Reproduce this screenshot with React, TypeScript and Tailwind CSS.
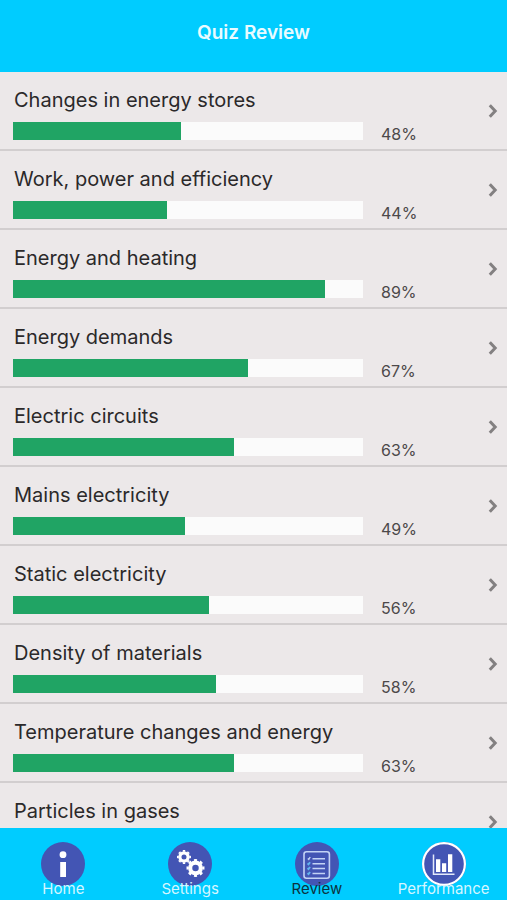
import type { ReactNode } from "react";
import { clsx } from "clsx";

const topics = [
  { name: "Changes in energy stores", score: 48 },
  { name: "Work, power and efficiency", score: 44 },
  { name: "Energy and heating", score: 89 },
  { name: "Energy demands", score: 67 },
  { name: "Electric circuits", score: 63 },
  { name: "Mains electricity", score: 49 },
  { name: "Static electricity", score: 56 },
  { name: "Density of materials", score: 58 },
  { name: "Temperature changes and energy", score: 63 },
  { name: "Particles in gases", score: 52 }
];

function Badge({ children }: { children: ReactNode }) {
  return (
    <svg viewBox="0 0 44 44" className="size-11" aria-hidden="true">
      <circle cx="22" cy="22" r="22" fill="#4355b4" />
      {children}
    </svg>
  );
}

function InfoIcon() {
  return (
    <Badge>
      <circle cx="22" cy="12.7" r="3.4" fill="#fff" />
      <rect x="19.2" y="20" width="5.8" height="15" fill="#fff" />
    </Badge>
  );
}

// eight teeth: the dashed ring is split into sixteen equal steps
function Gear({ cx, cy, r }: { cx: number; cy: number; r: number }) {
  return (
    <g fill="none" stroke="#fff">
      <circle cx={cx} cy={cy} r={r * 0.59} strokeWidth={r * 0.46} />
      <circle cx={cx} cy={cy} r={r * 0.88} strokeWidth={r * 0.24} pathLength="16" strokeDasharray="1 1" strokeDashoffset="0.5" />
    </g>
  );
}

function GearsIcon() {
  return (
    <Badge>
      <Gear cx={16} cy={15} r={7} />
      <Gear cx={27.5} cy={26} r={9} />
    </Badge>
  );
}

function ChecklistIcon() {
  return (
    <Badge>
      <rect x="9" y="9.8" width="25.4" height="26.4" rx="2.5" fill="none" stroke="#c3d3f5" strokeWidth="1.6" />
      <path d="M17.5 16.7H30M17.5 21.7H30M17.5 26.5H30M17.5 31.6H30" stroke="#c3d3f5" strokeWidth="1.5" />
      <path d="M12.8 16.4l1 1 1.4-2.4" fill="none" stroke="#c3d3f5" strokeWidth="1.4" />
      <path d="M12.5 21.4l1 1 1.6-2.2M12.5 26.2l1 1 1.6-2.2M12.5 31.2l1 1 1.6-2.2" fill="none" stroke="#62b5ee" strokeWidth="1.8" />
    </Badge>
  );
}

function ChartIcon() {
  return (
    <Badge>
      <circle cx="22" cy="22" r="20.9" fill="none" stroke="#fff" strokeWidth="2.2" />
      <path d="M11.5 12.5V32.2H32.5" fill="none" stroke="#e3e9fa" strokeWidth="1.5" />
      <path d="M14 17.3h4.3V30H14zM20 21.3h4.2V30H20zM26 12.2h4.3V30H26z" fill="#fff" />
    </Badge>
  );
}

const tabs = [
  { href: "#home", label: "Home", icon: InfoIcon },
  { href: "#settings", label: "Settings", icon: GearsIcon },
  { href: "#review", label: "Review", icon: ChecklistIcon, active: true },
  { href: "#performance", label: "Performance", icon: ChartIcon }
];

function TopicRow({ name, score }: { name: string; score: number }) {
  return (
    <li>
      <button type="button" className="flex w-full items-center border-b-2 border-[#d2cecf] pr-[9px] pl-[13px] text-left">
        <span className="flex-1 pt-4 pb-[9px]">
          <span className="block px-px text-[20px] leading-6 text-[#2b292a]">{name}</span>
          <span className="mt-2.5 flex items-center">
            <span className="h-[18px] flex-1 bg-[#fbfbfb]">
              <span className="block h-full bg-[#20a464]" style={{ width: `${score}%` }} />
            </span>
            <span className="h-[18px] w-[125px] pt-0.5 pl-4.5 text-[16px] leading-5 text-[#4c494a]">{score}%</span>
          </span>
        </span>
        <svg viewBox="0 0 10 14" className="h-3.5 w-2.5" aria-hidden="true">
          <path d="M1.8 1.2L7.2 7L1.8 12.8" fill="none" stroke="#838081" strokeWidth="3" />
        </svg>
      </button>
    </li>
  );
}

export default function App() {
  return (
    <div className="flex h-screen flex-col bg-[#ece8e9] font-['Inter','Liberation_Sans',sans-serif]">
      <header className="flex justify-center bg-[#00ccff] pt-[21px] pb-[27px]">
        <h1 className="text-[19px] leading-6 font-semibold text-[#e9fbff]">Quiz Review</h1>
      </header>
      <ul className="min-h-0 flex-1 overflow-y-auto [scrollbar-width:none]">
        {topics.map((topic) => (
          <TopicRow key={topic.name} {...topic} />
        ))}
      </ul>
      <nav className="grid grid-cols-4 bg-[#00ccff] pt-3.5 pb-px">
        {tabs.map((tab) => {
          const Icon = tab.icon;

          return (
            <a key={tab.label} href={tab.href} aria-current={tab.active ? "page" : undefined} className="flex flex-col items-center">
              <Icon />
              <span className={clsx("relative -mt-[7px] text-[15px] leading-5", tab.active ? "text-[#0c3340]" : "text-[#d5f6ff]")}>
                {tab.label}
              </span>
            </a>
          );
        })}
      </nav>
    </div>
  );
}
